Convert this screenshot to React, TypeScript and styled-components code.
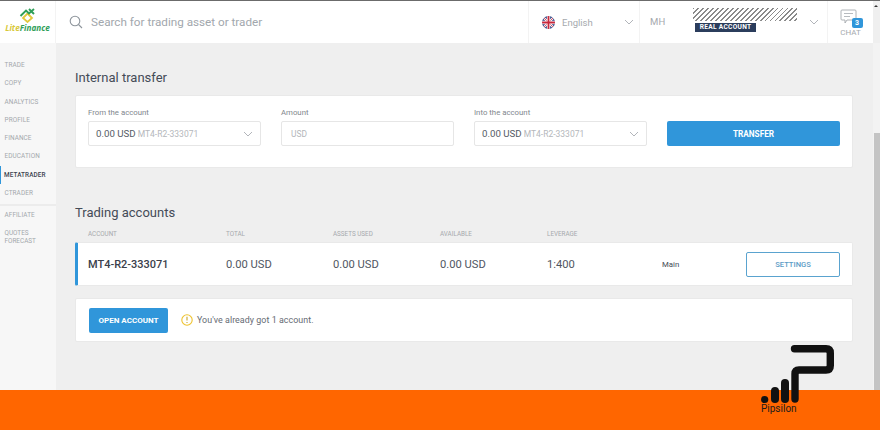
import React from "react";
import styled, { createGlobalStyle } from "styled-components";

const Global = createGlobalStyle`
  html, body { margin: 0; padding: 0; background: #efefef; }
  * { box-sizing: border-box; }
  body { font-family: Roboto, "Liberation Sans", sans-serif; }
`;

const Page = styled.div`
  position: relative;
  width: 880px;
  height: 430px;
  overflow: hidden;
  display: flex;
  flex-direction: column;
  background: #efefef;
  border-top: 1px solid #6b6b6b;
`;
const Header = styled.header`
  height: 42px;
  flex: none;
  display: flex;
  background: #fff;
  margin-right: 7px;
`;
const LogoBox = styled.div`
  width: 56px;
  flex: none;
  display: flex;
  flex-direction: column;
  align-items: center;
  padding-top: 7px;
  border-right: 1px solid #f3f3f3;
`;
const LogoText = styled.div`
  font: italic 700 8.2px "Open Sans", sans-serif;
  line-height: 9px;
  margin-top: 0;
  color: #2f9e58;
`;
const LogoLite = styled.span`
  color: #d8c83a;
`;
const SearchBox = styled.div`
  flex: 1;
  display: flex;
  align-items: center;
  gap: 8px;
  padding: 0 0 1px 13px;
  color: #a2a7ad;
  font-size: 11.7px;
`;
const HeadCell = styled.div<{ $w: number }>`
  width: ${(p) => p.$w}px;
  flex: none;
  display: flex;
  align-items: center;
  position: relative;
  border-left: 1px solid #f3f3f3;
  color: #a5a9ae;
`;
const LangCell = styled(HeadCell)`
  padding-left: 13px;
  gap: 7px;
  font-size: 9.5px;
`;
const Caret = styled.svg<{ $size?: number }>`
  position: absolute;
  right: ${(p) => p.$size ?? 8}px;
  top: 50%;
  margin-top: -3px;
`;
const UserCell = styled(HeadCell)`
  padding: 0 0 2px 10px;
  font-size: 9.5px;
  letter-spacing: 0.3px;
`;
const UserInfo = styled.div`
  margin-left: 27px;
  width: 105px;
  display: flex;
  flex-direction: column;
  align-items: flex-start;
  gap: 2px;
  margin-top: -2px;
`;
const Hatch = styled.div`
  width: 104px;
  height: 13px;
  background: repeating-linear-gradient(
    135deg,
    #8a8a8a 0 1.3px,
    #fff 1.3px 3.5px
  );
`;
const RealBadge = styled.div`
  background: #2b3d5c;
  color: #fff;
  font-size: 6.6px;
  font-weight: 700;
  line-height: 9px;
  padding: 0 5px;
  margin-left: 2px;
`;
const ChatCell = styled(HeadCell)`
  flex-direction: column;
  justify-content: center;
  font-size: 8px;
  line-height: 9px;
  gap: 2px;
  padding-top: 1px;
`;
const ChatIcon = styled.div`
  position: relative;
  height: 17px;
  width: 22px;
`;
const ChatBadge = styled.span`
  position: absolute;
  right: -1px;
  bottom: -2px;
  width: 11px;
  height: 10px;
  background: #3096da;
  border-radius: 2px;
  color: #fff;
  font-size: 7px;
  font-weight: 700;
  line-height: 10px;
  text-align: center;
`;
const ScrollArrow = styled.div`
  position: absolute;
  right: 2px;
  top: 4px;
  border-left: 2px solid transparent;
  border-right: 2px solid transparent;
  border-bottom: 2px solid #333;
`;
const Body = styled.div`
  flex: 1;
  min-height: 0;
  display: flex;
`;
const Sidebar = styled.nav`
  width: 56px;
  flex: none;
  background: #f7f7f7;
  padding-top: 13px;
`;
const NavItem = styled.div<{ $active?: boolean }>`
  height: 18.25px;
  display: flex;
  align-items: center;
  font-size: 6.4px;
  letter-spacing: 0.1px;
  color: ${(p) => (p.$active ? "#3d4450" : "#a3a7ac")};
  font-weight: ${(p) => (p.$active ? 500 : 400)};
  border-left: ${(p) => (p.$active ? "1.5px solid #3096da" : "none")};
  padding-left: ${(p) => (p.$active ? "3px" : "4.5px")};
`;
const NavRule = styled.div`
  height: 2px;
  background: #ececec;
  margin: 2px 0 0;
`;
const NavMulti = styled.div`
  font-size: 6.4px;
  line-height: 8px;
  padding: 5px 0 0 4.5px;
  color: #a3a7ac;
`;
const Main = styled.main`
  flex: 1;
  padding: 26px 0 0 19px;
  display: flex;
  flex-direction: column;
`;
const ScrollTrack = styled.div`
  width: 7px;
  flex: none;
  display: flex;
  flex-direction: column;
  background: #f3f3f3;
  padding: 90px 0 0 1px;
`;
const ScrollThumb = styled.div`
  flex: 1;
  background: #c4c4c4;
`;
const Title = styled.h2`
  margin: 0;
  font-size: 13px;
  line-height: 18px;
  font-weight: 400;
  color: #444b57;
`;
const Card = styled.section`
  width: 778px;
  background: #fff;
  border: 1px solid #e9e9e9;
  border-radius: 2px;
`;
const TransferCard = styled(Card)`
  height: 73px;
  margin-top: 8px;
  padding: 12px 13px 0 12px;
  display: grid;
  grid-template-columns: repeat(4, 173px);
  column-gap: 20px;
`;
const Field = styled.div`
  display: flex;
  flex-direction: column;
`;
const Label = styled.div`
  font-size: 7.8px;
  line-height: 9px;
  color: #82878e;
  margin-bottom: 4px;
`;
const Select = styled.div`
  height: 25px;
  border: 1px solid #e6e6e6;
  border-radius: 2px;
  display: flex;
  align-items: center;
  padding-left: 7px;
  position: relative;
  font-size: 9.7px;
  color: #555b65;
`;
const Sub = styled.span`
  font-size: 8.5px;
  color: #b4b7bb;
  margin-left: 2px;
`;
const AmountInput = styled(Select)`
  font-size: 8.4px;
  color: #b3b6ba;
  padding-left: 9px;
`;
const Button = styled.div<{ $outline?: boolean }>`
  display: flex;
  align-items: center;
  justify-content: center;
  height: 25px;
  border-radius: 2px;
  font-size: ${(p) => (p.$outline ? "7.6px" : "8px")};
  background: ${(p) => (p.$outline ? "#fff" : "#3096da")};
  color: ${(p) => (p.$outline ? "#5c9cc6" : "#fff")};
  border: ${(p) => (p.$outline ? "1px solid #5aa3cf" : "none")};
  font-weight: ${(p) => (p.$outline ? 500 : 700)};
`;
const TransferButton = styled(Button)`
  margin-top: 13px;
  font-size: 8.2px;
`;
const Section2 = styled(Title)`
  margin-top: 36px;
`;
const Cols = styled.div`
  width: 778px;
  display: grid;
  grid-template-columns: 138px 107px 107px 107px 115px;
  padding-left: 13px;
  height: 10px;
  margin-top: 7px;
  font-size: 6.3px;
  line-height: 10px;
  color: #a6a9ad;
`;
const AccountRow = styled(Card)`
  height: 44px;
  margin-top: 3px;
  border-left: 3px solid #3096da;
  padding: 0 12px 0 10px;
  display: grid;
  grid-template-columns: 138px 107px 107px 107px 115px 1fr 94px;
  align-items: center;
  font-size: 11.2px;
  color: #50565f;
`;
const AccName = styled.div`
  font-size: 11px;
  font-weight: 500;
  color: #3a404b;
`;
const Tag = styled.div`
  font-size: 7.8px;
  color: #444a54;
`;
const OpenCard = styled(Card)`
  height: 44px;
  margin-top: 12px;
  padding: 0 13px;
  display: flex;
  align-items: center;
`;
const OpenButton = styled(Button)`
  width: 79px;
`;
const Note = styled.div`
  margin-left: 13px;
  display: flex;
  align-items: center;
  gap: 4px;
  font-size: 8.9px;
  letter-spacing: 0.05px;
  color: #656b73;
`;
const Footer = styled.footer`
  height: 40px;
  flex: none;
  background: #ff6600;
`;
const Brand = styled.div`
  position: absolute;
  left: 760px;
  top: 343px;
  width: 76px;
  height: 72px;
`;
const BrandName = styled.div`
  position: absolute;
  left: 1px;
  top: 59px;
  font-size: 10px;
  line-height: 11px;
  color: #1c1c1c;
`;

const Chevron = ({ right = 7 }: { right?: number }) => (
  <Caret $size={right} width="10" height="6" viewBox="0 0 10 6" fill="none">
    <path d="M1 1l4 4 4-4" stroke="#a9adb2" strokeWidth="0.9" />
  </Caret>
);

const Flag = () => (
  <svg width="13" height="13" viewBox="0 0 13 13">
    <defs>
      <clipPath id="flagClip">
        <circle cx="6.5" cy="6.5" r="6.5" />
      </clipPath>
    </defs>
    <g clipPath="url(#flagClip)">
      <rect width="13" height="13" fill="#2b3f7f" />
      <path d="M0 0l13 13M13 0L0 13" stroke="#fff" strokeWidth="2.2" />
      <path d="M0 0l13 13M13 0L0 13" stroke="#c8283c" strokeWidth="0.8" />
      <path d="M6.5 0v13M0 6.5h13" stroke="#fff" strokeWidth="3.4" />
      <path d="M6.5 0v13M0 6.5h13" stroke="#c8283c" strokeWidth="1.8" />
    </g>
  </svg>
);

const nav = ["TRADE", "COPY", "ANALYTICS", "PROFILE", "FINANCE", "EDUCATION", "METATRADER", "CTRADER"];

const App = () => (
  <Page>
    <Global />
    <Header>
      <LogoBox>
        <svg width="17" height="15" viewBox="0 0 17 15" fill="none">
          <path d="M8.5 5.5L13 10 8.5 14 4 10z" stroke="#e2c83c" strokeWidth="1.8" />
          <path d="M1.5 8L7 2.5 10 5.5 15 1" stroke="#2f9e58" strokeWidth="1.9" />
          <path d="M10 1l5 5" stroke="#2f9e58" strokeWidth="1.9" />
        </svg>
        <LogoText>
          <LogoLite>Lite</LogoLite>Finance
        </LogoText>
      </LogoBox>
      <SearchBox>
        <svg width="14" height="14" viewBox="0 0 14 14" fill="none">
          <circle cx="6" cy="6" r="4.8" stroke="#8e959c" strokeWidth="1.1" />
          <path d="M9.5 9.5L13 13" stroke="#8e959c" strokeWidth="1.1" />
        </svg>
        Search for trading asset or trader
      </SearchBox>
      <LangCell $w={111}>
        <Flag />
        English
        <Chevron right={5} />
      </LangCell>
      <UserCell $w={188}>
        MH
        <UserInfo>
          <Hatch />
          <RealBadge>REAL ACCOUNT</RealBadge>
        </UserInfo>
        <Chevron right={8} />
      </UserCell>
      <ChatCell $w={46}>
        <ChatIcon>
          <svg width="20" height="16" viewBox="0 0 20 16" fill="none">
            <path d="M2 1h13a1 1 0 0 1 1 1v8a1 1 0 0 1-1 1H7l-2 3v-3H2a1 1 0 0 1-1-1V2a1 1 0 0 1 1-1z" stroke="#a5a9ae" strokeWidth="0.9" />
            <path d="M4 4.5h9M4 7.5h6" stroke="#a5a9ae" strokeWidth="0.8" />
          </svg>
          <ChatBadge>3</ChatBadge>
        </ChatIcon>
        CHAT
      </ChatCell>
    </Header>
    <ScrollArrow />
    <Body>
      <Sidebar>
        {nav.map((n) => (
          <NavItem key={n} $active={n === "METATRADER"}>
            {n}
          </NavItem>
        ))}
        <NavRule />
        <NavItem>AFFILIATE</NavItem>
        <NavMulti>
          QUOTES
          <br />
          FORECAST
        </NavMulti>
      </Sidebar>
      <Main>
        <Title>Internal transfer</Title>
        <TransferCard>
          <Field>
            <Label>From the account</Label>
            <Select>
              0.00 USD <Sub>MT4-R2-333071</Sub>
              <Chevron />
            </Select>
          </Field>
          <Field>
            <Label>Amount</Label>
            <AmountInput>USD</AmountInput>
          </Field>
          <Field>
            <Label>Into the account</Label>
            <Select>
              0.00 USD <Sub>MT4-R2-333071</Sub>
              <Chevron />
            </Select>
          </Field>
          <TransferButton>TRANSFER</TransferButton>
        </TransferCard>
        <Section2>Trading accounts</Section2>
        <Cols>
          <div>ACCOUNT</div>
          <div>TOTAL</div>
          <div>ASSETS USED</div>
          <div>AVAILABLE</div>
          <div>LEVERAGE</div>
        </Cols>
        <AccountRow>
          <AccName>MT4-R2-333071</AccName>
          <div>0.00 USD</div>
          <div>0.00 USD</div>
          <div>0.00 USD</div>
          <div>1:400</div>
          <Tag>Main</Tag>
          <Button $outline>SETTINGS</Button>
        </AccountRow>
        <OpenCard>
          <OpenButton>OPEN ACCOUNT</OpenButton>
          <Note>
            <svg width="12" height="12" viewBox="0 0 12 12" fill="none">
              <circle cx="6" cy="6" r="5.2" stroke="#eec32f" strokeWidth="1.1" />
              <path d="M6 2.8v3.8M6 8v1.1" stroke="#c9a528" strokeWidth="1.1" />
            </svg>
            You've already got 1 account.
          </Note>
        </OpenCard>
      </Main>
      <ScrollTrack>
        <ScrollThumb />
      </ScrollTrack>
    </Body>
    <Footer />
    <Brand>
      <svg width="76" height="60" viewBox="0 0 76 60" fill="none">
        <path d="M34.5 4.7H66Q70.3 4.7 70.3 9V21.5Q70.3 26 66 26H39Q35 26 35 30V55" stroke="#111" strokeWidth="7.4" strokeLinecap="round" />
        <rect x="21" y="35" width="8" height="24" rx="4" fill="#111" />
        <rect x="11" y="43" width="8" height="16" rx="4" fill="#111" />
        <circle cx="4.7" cy="55.5" r="3.6" fill="#111" />
      </svg>
      <BrandName>Pipsilon</BrandName>
    </Brand>
  </Page>
);

export default App;
